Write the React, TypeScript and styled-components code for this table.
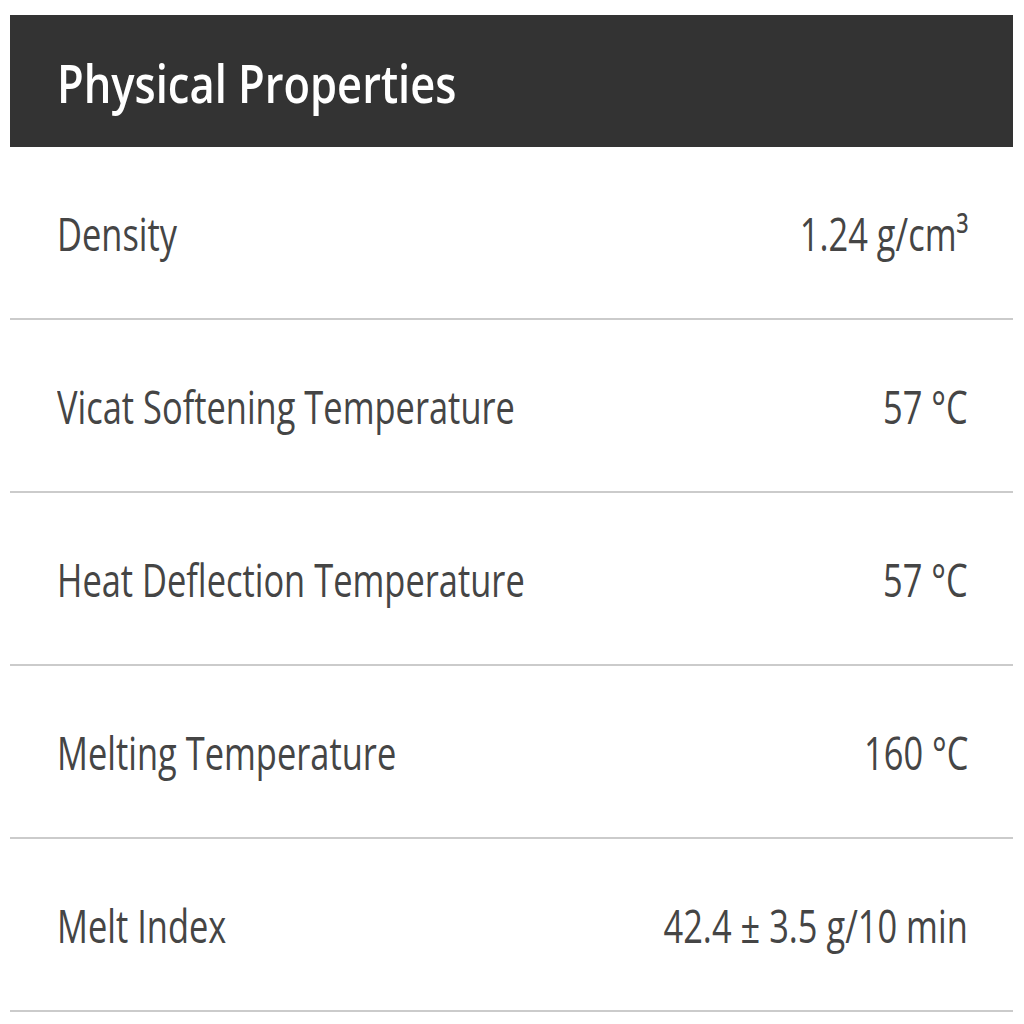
import styled, { createGlobalStyle } from 'styled-components';

const GlobalStyle = createGlobalStyle`
    body {
        margin: 0;
        background: #fff;
        font-family: "Open Sans", "Liberation Sans", sans-serif;
    }
`;

const Panel = styled.div`
    margin: 15px 11px 0 10px;
    display: flex;
    flex-direction: column;
`;

const Header = styled.div`
    height: 132px;
    background: #333333;
    display: flex;
    align-items: center;
    padding-left: 47px;
`;

const Title = styled.span`
    display: inline-block;
    color: #fff;
    font-weight: 600;
    font-size: 53px;
    transform: scaleX(0.82);
    transform-origin: left center;
    white-space: nowrap;
    margin-top: 2px;
`;

const Row = styled.div`
    height: 171px;
    display: flex;
    align-items: center;
    justify-content: space-between;
    padding: 0 45px 0 47px;
    border-bottom: 2px solid #cbcbcb;
    color: #454545;
`;

const Cell = styled.span<{ $right?: boolean }>`
    display: inline-block;
    font-size: 45px;
    white-space: nowrap;
    transform: scaleX(0.765);
    transform-origin: ${(p) => (p.$right ? 'right' : 'left')} center;
    margin-top: 2px;
`;

const rows: [string, string][] = [
    ['Density', '1.24 g/cm³'],
    ['Vicat Softening Temperature', '57 °C'],
    ['Heat Deflection Temperature', '57 °C'],
    ['Melting Temperature', '160 °C'],
    ['Melt Index', '42.4 ± 3.5 g/10 min'],
];

export default function App() {
    return (
        <>
            <GlobalStyle />
            <Panel>
                <Header>
                    <Title>Physical Properties</Title>
                </Header>
                {rows.map(([label, value]) => (
                    <Row key={label}>
                        <Cell>{label}</Cell>
                        <Cell $right>{value}</Cell>
                    </Row>
                ))}
            </Panel>
        </>
    );
}
